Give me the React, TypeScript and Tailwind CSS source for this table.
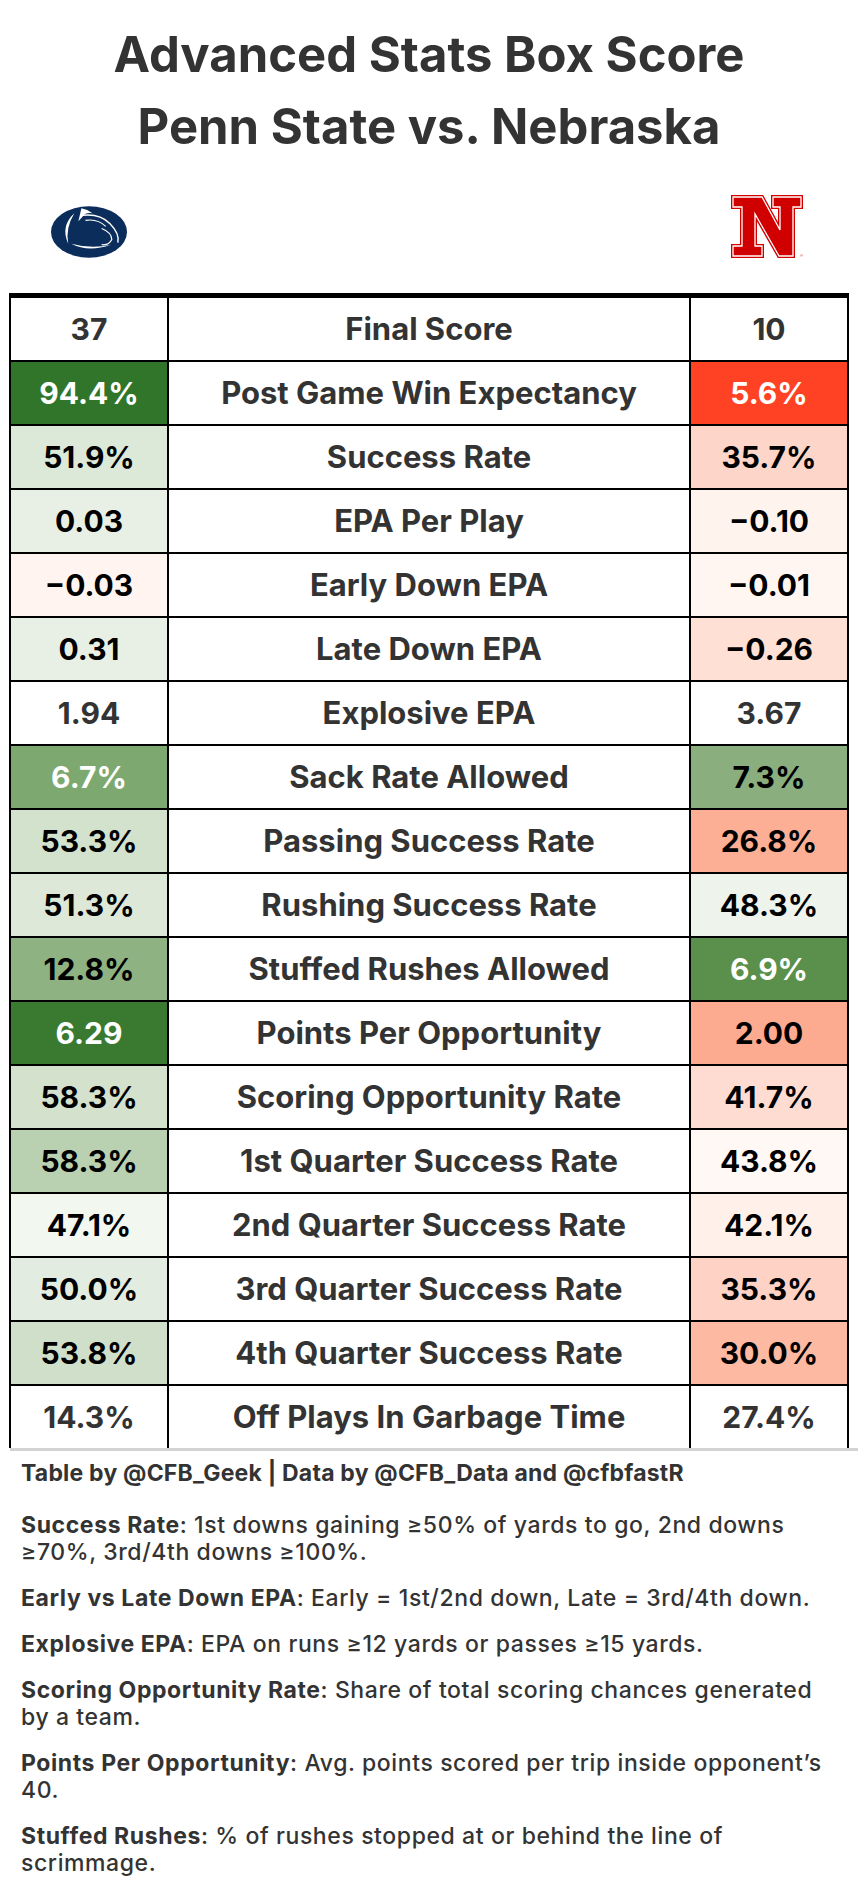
import React from "react";

type Row = {
  left: string;
  label: string;
  right: string;
  lbg?: string;
  rbg?: string;
};

const rows: Row[] = [
  { left: "37", label: "Final Score", right: "10" },
  { left: "94.4%", label: "Post Game Win Expectancy", right: "5.6%", lbg: "#31752a", rbg: "#ff4224" },
  { left: "51.9%", label: "Success Rate", right: "35.7%", lbg: "#dce8d8", rbg: "#fdd6c9" },
  { left: "0.03", label: "EPA Per Play", right: "\u22120.10", lbg: "#e8f0e5", rbg: "#fff3ee" },
  { left: "\u22120.03", label: "Early Down EPA", right: "\u22120.01", lbg: "#fff4ef", rbg: "#fff6f2" },
  { left: "0.31", label: "Late Down EPA", right: "\u22120.26", lbg: "#e8f0e5", rbg: "#fee0d5" },
  { left: "1.94", label: "Explosive EPA", right: "3.67" },
  { left: "6.7%", label: "Sack Rate Allowed", right: "7.3%", lbg: "#7da870", rbg: "#8aae7e" },
  { left: "53.3%", label: "Passing Success Rate", right: "26.8%", lbg: "#d3e2cd", rbg: "#fdaf95" },
  { left: "51.3%", label: "Rushing Success Rate", right: "48.3%", lbg: "#dde8d9", rbg: "#eef3ec" },
  { left: "12.8%", label: "Stuffed Rushes Allowed", right: "6.9%", lbg: "#8fb283", rbg: "#5a904c" },
  { left: "6.29", label: "Points Per Opportunity", right: "2.00", lbg: "#3a7a30", rbg: "#fdab90" },
  { left: "58.3%", label: "Scoring Opportunity Rate", right: "41.7%", lbg: "#d3e1cd", rbg: "#fedcd1" },
  { left: "58.3%", label: "1st Quarter Success Rate", right: "43.8%", lbg: "#b9d0b1", rbg: "#fff8f5" },
  { left: "47.1%", label: "2nd Quarter Success Rate", right: "42.1%", lbg: "#f2f7f0", rbg: "#fff0ea" },
  { left: "50.0%", label: "3rd Quarter Success Rate", right: "35.3%", lbg: "#e3ece0", rbg: "#fed2c4" },
  { left: "53.8%", label: "4th Quarter Success Rate", right: "30.0%", lbg: "#d0dfca", rbg: "#fdb9a2" },
  { left: "14.3%", label: "Off Plays In Garbage Time", right: "27.4%" },
];

// dark fills get white text
const darkFills = ["#31752a", "#ff4224", "#7da870", "#5a904c", "#3a7a30"];

function textColor(bg?: string) {
  if (!bg) return "#333333";
  return darkFills.includes(bg) ? "#ffffff" : "#000000";
}

function PennStateLogo() {
  return (
    <svg width="76" height="52" viewBox="0 0 75 51">
      <ellipse cx="37.5" cy="25.5" rx="37.5" ry="25.5" fill="#0b2d5b" />
      <path d="M23 7 Q9 20 17 37 Q14 22 23 7Z" fill="#ffffff" />
      <path d="M27 15 L30 2 Q36 3 41 7 Q34 6 31.5 10 Z" fill="#ffffff" />
      <path d="M31 9 Q48 7 58 17 Q68 27 66 36" stroke="#ffffff" strokeWidth="1.4" fill="none" />
      <path d="M34 14 Q46 12 54 20" stroke="#ffffff" strokeWidth="1.1" fill="none" />
      <path d="M50 22 Q60 26 60 33 Q57 39 50 38" stroke="#ffffff" strokeWidth="1.2" fill="none" />
      <path d="M20 37 Q37 46 59 38 Q40 42.5 20 37Z" fill="#ffffff" />
    </svg>
  );
}

function NebraskaLogo() {
  const pts =
    "0,0 29,0 47,33 47,10 40,10 40,0 68,0 68,10 60,10 60,59 46,59 22,17 22,49 29,49 29,59 0,59 0,49 9,49 9,10 0,10";
  return (
    <svg width="72" height="63" viewBox="-2 -2 72 63">
      <polygon points={pts} fill="#d00000" stroke="#d00000" strokeWidth="4" strokeLinejoin="miter" />
      <polygon points={pts} fill="#d00000" stroke="#ffffff" strokeWidth="1.3" strokeLinejoin="miter" />
      <text x="67" y="60" fontSize="4" fill="#d00000" fontFamily="Liberation Sans, sans-serif">
        ®
      </text>
    </svg>
  );
}

function StatRow({ row, last }: { row: Row; last: boolean }) {
  return (
    <div className={`flex ${last ? "h-[62px]" : "h-[64px] border-b-2 border-black"}`}>
      <div
        className="w-[158px] flex items-center justify-center border-r-2 border-black text-[30px]"
        style={{ backgroundColor: row.lbg ?? "#ffffff", color: textColor(row.lbg) }}
      >
        {row.left}
      </div>
      <div className="w-[522px] flex items-center justify-center border-r-2 border-black text-[31px] text-[#333333]">
        {row.label}
      </div>
      <div
        className="flex-1 flex items-center justify-center text-[30px]"
        style={{ backgroundColor: row.rbg ?? "#ffffff", color: textColor(row.rbg) }}
      >
        {row.right}
      </div>
    </div>
  );
}

export default function App() {
  return (
    <div className="w-[858px] h-[1898px] bg-white font-['Inter',_sans-serif] overflow-hidden">
      {/* Title */}
      <div className="pt-[19px] text-center text-[49px] leading-[72px] font-bold text-[#333333]">
        <div>Advanced Stats Box Score</div>
        <div>Penn State vs. Nebraska</div>
      </div>

      {/* Logos */}
      <div className="mt-[35px] h-[60px] flex items-end justify-between pl-[51px] pr-[55px]">
        <PennStateLogo />
        <NebraskaLogo />
      </div>

      {/* Table */}
      <div className="mt-[35px] mx-[9px] w-[840px] border-t-[5px] border-x-2 border-black font-bold">
        {rows.map((r, i) => (
          <StatRow key={i} row={r} last={i === rows.length - 1} />
        ))}
      </div>
      <div className="ml-[10px] w-[848px] h-[3px] bg-[#d3d3d3]" />

      {/* Footnotes */}
      <div className="pt-[9px] pl-[21px] text-[23px] leading-[27px] tracking-[0.6px] text-[#333333] font-medium space-y-[19px]">
        <p className="font-bold tracking-[0.2px] pb-[6px]">Table by @CFB_Geek | Data by @CFB_Data and @cfbfastR</p>
        <p>
          <span className="font-bold">Success Rate</span>: 1st downs gaining ≥50% of yards to go, 2nd downs
          <br />
          ≥70%, 3rd/4th downs ≥100%.
        </p>
        <p>
          <span className="font-bold">Early vs Late Down EPA</span>: Early = 1st/2nd down, Late = 3rd/4th down.
        </p>
        <p>
          <span className="font-bold">Explosive EPA</span>: EPA on runs ≥12 yards or passes ≥15 yards.
        </p>
        <p>
          <span className="font-bold">Scoring Opportunity Rate</span>: Share of total scoring chances generated
          <br />
          by a team.
        </p>
        <p>
          <span className="font-bold">Points Per Opportunity</span>: Avg. points scored per trip inside opponent’s
          <br />
          40.
        </p>
        <p>
          <span className="font-bold">Stuffed Rushes</span>: % of rushes stopped at or behind the line of
          <br />
          scrimmage.
        </p>
      </div>
    </div>
  );
}
